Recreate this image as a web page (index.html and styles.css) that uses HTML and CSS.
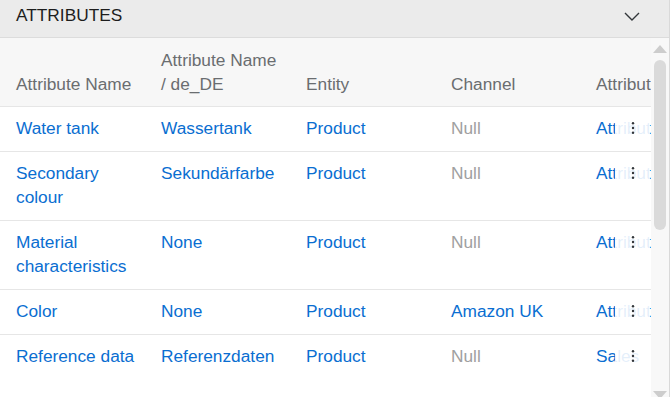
FILE: index.html
```html
<!DOCTYPE html>
<html lang="en">
<head>
  <meta charset="UTF-8">
  <title>Attributes</title>
  <link rel="stylesheet" href="styles.css">
</head>
<body>
  <div class="panel">
    <div class="panel-header">
      <span class="panel-title">ATTRIBUTES</span>
      <svg class="chevron" width="16" height="9" viewBox="0 0 16 9">
        <path d="M1 1 L8 8 L15 1" fill="none" stroke="#32363a" stroke-width="1.4"/>
      </svg>
    </div>

    <div class="panel-body">
      <div class="table-clip">
        <table class="attr-table">
          <thead>
            <tr>
              <th>Attribute Name</th>
              <th>Attribute Name / de_DE</th>
              <th>Entity</th>
              <th>Channel</th>
              <th>Attribute Group</th>
            </tr>
          </thead>
          <tbody>
            <tr>
              <td><a href="#">Water tank</a></td>
              <td><a href="#">Wassertank</a></td>
              <td><a href="#">Product</a></td>
              <td class="muted">Null</td>
              <td class="last"><a href="#">Attributes</a><span class="row-actions"><svg width="4" height="12" viewBox="0 0 4 12"><circle cx="2" cy="1.3" r="1.2"/><circle cx="2" cy="6" r="1.2"/><circle cx="2" cy="10.7" r="1.2"/></svg></span></td>
            </tr>
            <tr>
              <td><a href="#">Secondary colour</a></td>
              <td><a href="#">Sekundärfarbe</a></td>
              <td><a href="#">Product</a></td>
              <td class="muted">Null</td>
              <td class="last"><a href="#">Attributes</a><span class="row-actions"><svg width="4" height="12" viewBox="0 0 4 12"><circle cx="2" cy="1.3" r="1.2"/><circle cx="2" cy="6" r="1.2"/><circle cx="2" cy="10.7" r="1.2"/></svg></span></td>
            </tr>
            <tr>
              <td><a href="#">Material characteristics</a></td>
              <td><a href="#">None</a></td>
              <td><a href="#">Product</a></td>
              <td class="muted">Null</td>
              <td class="last"><a href="#">Attributes</a><span class="row-actions"><svg width="4" height="12" viewBox="0 0 4 12"><circle cx="2" cy="1.3" r="1.2"/><circle cx="2" cy="6" r="1.2"/><circle cx="2" cy="10.7" r="1.2"/></svg></span></td>
            </tr>
            <tr>
              <td><a href="#">Color</a></td>
              <td><a href="#">None</a></td>
              <td><a href="#">Product</a></td>
              <td><a href="#">Amazon UK</a></td>
              <td class="last"><a href="#">Attributes</a><span class="row-actions"><svg width="4" height="12" viewBox="0 0 4 12"><circle cx="2" cy="1.3" r="1.2"/><circle cx="2" cy="6" r="1.2"/><circle cx="2" cy="10.7" r="1.2"/></svg></span></td>
            </tr>
            <tr>
              <td><a href="#">Reference data</a></td>
              <td><a href="#">Referenzdaten</a></td>
              <td><a href="#">Product</a></td>
              <td class="muted">Null</td>
              <td class="last"><a href="#">Sales</a><span class="row-actions"><svg width="4" height="12" viewBox="0 0 4 12"><circle cx="2" cy="1.3" r="1.2"/><circle cx="2" cy="6" r="1.2"/><circle cx="2" cy="10.7" r="1.2"/></svg></span></td>
            </tr>
          </tbody>
        </table>
      </div>

      <div class="scrollbar">
        <svg class="scroll-arrow" width="14" height="8" viewBox="0 0 14 8"><path d="M0 8 L7 0 L14 8 Z" fill="#cdcdcd"/></svg>
        <div class="scroll-track">
          <div class="scroll-thumb"></div>
        </div>
        <svg class="scroll-arrow" width="14" height="8" viewBox="0 0 14 8"><path d="M0 0 L7 8 L14 0 Z" fill="#cdcdcd"/></svg>
      </div>
    </div>
  </div>
</body>
</html>
```

FILE: styles.css
```css
html, body {
  margin: 0;
  overflow: hidden;
  background: #ffffff;
}
body {
  font-family: "Liberation Sans", Arial, sans-serif;
  font-size: 17.3px;
  line-height: 24px;
  color: #32363a;
}
.panel {
  width: 669px;
  border-right: 1px solid #d9d9d9;
}
.panel-header {
  height: 38px;
  box-sizing: border-box;
  padding: 3px 29px 0 16px;
  display: flex;
  justify-content: space-between;
  align-items: flex-start;
  background: #ebebeb;
  border-bottom: 1px solid #dcdcdc;
}
.panel-title {
  color: #1d1d1d;
}
.chevron {
  margin-top: 9px;
}
.panel-body {
  display: flex;
  height: 366px;
}
.table-clip {
  width: 651px;
  overflow: hidden;
}
.attr-table {
  table-layout: fixed;
  width: 725px;
  border-collapse: collapse;
}
.attr-table th,
.attr-table td {
  width: 145px;
  box-sizing: border-box;
  padding: 9px 8px 11px 16px;
  text-align: left;
  vertical-align: top;
  border-bottom: 1px solid #e6e6e6;
  white-space: normal;
}
.attr-table th {
  padding: 10px 8px 10px 16px;
  font-weight: normal;
  color: #6a6d70;
  background: #f7f7f7;
  vertical-align: bottom;
}
.attr-table tbody tr:last-child td {
  border-bottom: none;
}
.attr-table a {
  color: #0a6ed1;
  text-decoration: none;
}
.attr-table td.muted {
  color: #a0a0a0;
}
.attr-table td.last {
  position: relative;
  white-space: nowrap;
}
.row-actions {
  position: absolute;
  top: 0;
  bottom: 0;
  left: 35px;
  width: 35px;
  background: rgba(255, 255, 255, 0.89);
  display: flex;
  justify-content: center;
  padding-top: 15px;
  box-sizing: border-box;
}
.row-actions svg {
  fill: #32363a;
}
.scrollbar {
  width: 18px;
  background: #f8f8f8;
  display: flex;
  flex-direction: column;
  align-items: center;
  padding: 7px 0 5px;
  box-sizing: border-box;
}
.scroll-track {
  flex: 1;
  width: 100%;
  display: flex;
  justify-content: center;
  padding-top: 7px;
}
.scroll-thumb {
  width: 12px;
  height: 170px;
  border-radius: 6px;
  background: #dadada;
}
```
